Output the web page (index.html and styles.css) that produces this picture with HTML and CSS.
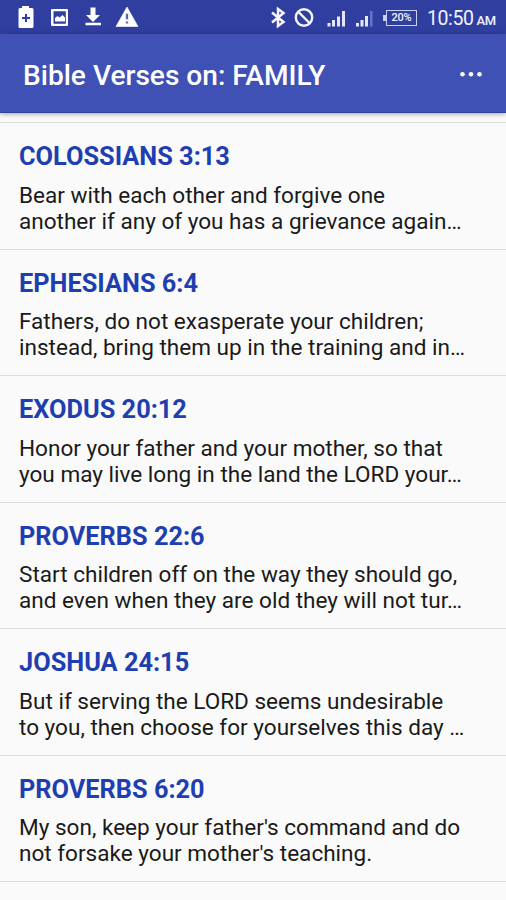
FILE: index.html
```html
<!DOCTYPE html>
<html lang="en">
<head>
<meta charset="utf-8">
<title>Bible Verses on: FAMILY</title>
<link rel="stylesheet" href="styles.css">
</head>
<body>
<div class="status">
  <svg class="status-icons" width="260" height="34" viewBox="0 0 260 34" fill="#fff">
    <path fill-rule="evenodd" d="M22 6h7v2h3q1.500 0 1.500 1.500v17q0 1.500-1.500 1.500H20q-1.500 0-1.500-1.500v-17Q18.500 8 20 8h2zM25 14v3h-3v2h3v3h2v-3h3v-2h-3v-3z"/>
    <path fill-rule="evenodd" d="M52 9h15q1 0 1 1v15q0 1-1 1H52q-1 0-1-1V10q0-1 1-1zm1.500 2.200v12.600h12.300V11.200z"/>
    <path d="M55 21.500V18l2.500-2 2 1.500 3-2.500 2.500 2.500v4z"/>
    <path d="M90.500 7.500h5V15h4.500l-7 7-7-7h4.500zM85.500 22.800h15.500v2.400H85.500z"/>
    <path fill-rule="evenodd" d="M127 7l11 19.500h-22zM125.800 13.500v6h2.400v-6zM125.800 21.300v2.400h2.400v-2.400z" stroke="#fff" stroke-width=".6" stroke-linejoin="round"/>
  </svg>
  <div class="status-right">
    <svg width="114" height="34" viewBox="268 0 114 34">
      <path d="M272 12.500l11.500 9.500-5.500 4V9l5.500 4L272 22.500" fill="none" stroke="#f4f5ff" stroke-width="2.500"/>
      <circle cx="304" cy="17.500" r="8.200" fill="none" stroke="#f4f5ff" stroke-width="2.400"/>
      <path d="M298.500 12l11 11" stroke="#f4f5ff" stroke-width="2.400"/>
      <path fill="#e4e7ff" d="M327.500 23h3v3.500h-3zM332 20h3v6.500h-3zM337 16.500h3v10h-3zM342 11h3v15.500h-3zM356 23h3v3.500h-3zM360.500 20h3v6.500h-3zM365 16h3v10.500h-3z"/>
      <path fill="#6574c4" d="M370 11h2.500v15.500H370z"/>
    </svg>
    <div class="battery">20%</div>
    <div class="clock">10:50<span class="ampm">AM</span></div>
  </div>
</div>
<header class="bar">
  <h1>Bible Verses on: FAMILY</h1>
  <svg width="24" height="8" viewBox="0 0 24 8" fill="#fff"><circle cx="3.500" cy="3.300" r="2.300"/><circle cx="12" cy="3.300" r="2.300"/><circle cx="20.500" cy="3.300" r="2.300"/></svg>
</header>
<main class="list">
  <article><h2>COLOSSIANS 3:13</h2><p>Bear with each other and forgive one<br>another if any of you has a grievance again…</p></article>
  <article><h2>EPHESIANS 6:4</h2><p>Fathers, do not exasperate your children;<br>instead, bring them up in the training and in…</p></article>
  <article><h2>EXODUS 20:12</h2><p>Honor your father and your mother, so that<br>you may live long in the land the LORD your…</p></article>
  <article><h2>PROVERBS 22:6</h2><p>Start children off on the way they should go,<br>and even when they are old they will not tur…</p></article>
  <article><h2>JOSHUA 24:15</h2><p>But if serving the LORD seems undesirable<br>to you, then choose for yourselves this day …</p></article>
  <article><h2>PROVERBS 6:20</h2><p>My son, keep your father's command and do<br>not forsake your mother's teaching.</p></article>
  <div class="end"></div>
</main>
</body>
</html>
```
FILE: styles.css
```css
* { box-sizing: border-box; margin: 0; padding: 0; }
body {
  height: 900px;
  overflow: hidden;
  background: #fafafa;
  font-family: Roboto, sans-serif;
}
.status {
  height: 34px;
  display: flex;
  justify-content: space-between;
  background: #303f9f;
  color: #f0f2ff;
}
.status svg { display: block; flex: none; }
.status-right { display: flex; align-items: center; width: 238px; }
.battery {
  position: relative;
  width: 31px;
  height: 16px;
  margin: 1px 0 0 4px;
  border: 1.500px solid #c9cff5;
  font-size: 11px;
  font-weight: 500;
  line-height: 14px;
  letter-spacing: -.2px;
  text-align: center;
}
.battery::before {
  content: "";
  position: absolute;
  left: -4px;
  top: 4px;
  width: 3px;
  height: 6px;
  background: #c9cff5;
}
.clock {
  margin: 5px 0 0 10px;
  font-size: 19.500px;
  line-height: 24px;
  letter-spacing: -.4px;
  white-space: nowrap;
}
.ampm { margin-left: 3px; font-size: 13px; font-weight: 500; }
.bar {
  position: relative;
  height: 79px;
  padding: 4px 23px 0;
  display: flex;
  align-items: center;
  justify-content: space-between;
  background: #3f51b5;
  border-bottom: 1px solid #2b419f;
  box-shadow: 0 1px 5px rgba(0, 0, 0, .35);
  color: #fff;
}
.bar h1 { font-size: 28.100px; line-height: 35px; font-weight: 500; white-space: nowrap; }
.list { padding-top: 9px; }
.list article {
  height: 126.500px;
  padding: 18px 19px 0;
  border-top: 1.500px solid #dcdcdc;
}
.list h2 {
  color: #1f3fb0;
  font-size: 25.350px;
  line-height: 30px;
  font-weight: 700;
  white-space: nowrap;
}
.list p {
  margin-top: 11.700px;
  color: #1a1a1a;
  font-size: 22.550px;
  line-height: 26px;
  white-space: nowrap;
}
.end { border-top: 1.500px solid #dcdcdc; }
```
